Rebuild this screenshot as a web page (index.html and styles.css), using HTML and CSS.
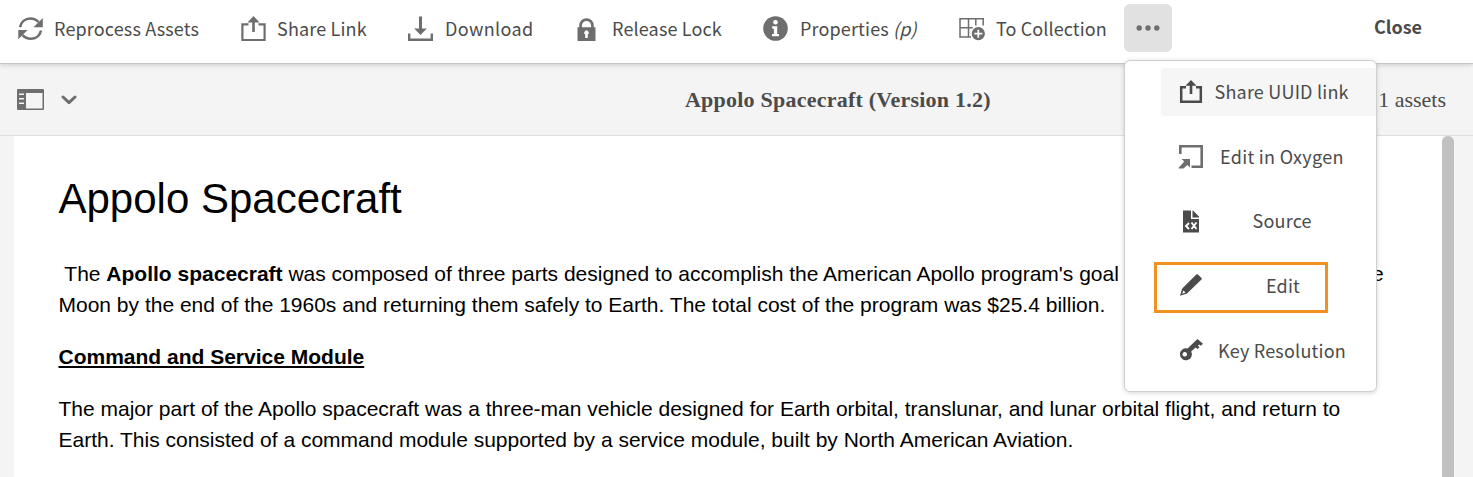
FILE: index.html
```html
<!DOCTYPE html>
<html lang="en">
<head>
<meta charset="utf-8">
<title>Appolo Spacecraft</title>
<link rel="stylesheet" href="styles.css">
</head>
<body>
<div class="app">
  <header class="toolbar">
    <div class="action"><svg class="icon" viewBox="0 0 25 25"><path d="M2 11.300C3 6 7 2.500 12.300 2.500c3.500 0 6.200 1.300 8.200 3.500M23 14.500C22 19.500 18 22.700 12.800 22.700c-3.500 0-6.300-1.300-8.300-3.500" fill="none" stroke="currentColor" stroke-width="2.500"/><path d="M24.800 2v9.200H15.500zM.300 23.200V14H9.600z"/></svg><span class="t-reprocess">Reprocess Assets</span></div>
    <div class="action"><svg class="icon" viewBox="0 0 25 25"><path d="M7.500 8.300H1.400V24h22.200V8.300h-6.100" fill="none" stroke="currentColor" stroke-width="2.200"/><path d="M12.500 0l6 6.500h-4.700V16h-2.600V6.500H6.500z"/></svg><span class="t-share">Share Link</span></div>
    <div class="action"><svg class="icon" viewBox="0 0 25 25"><path d="M1.200 17.500v6.200h22.600v-6.200" fill="none" stroke="currentColor" stroke-width="2.400"/><path d="M11 .500h3v12h4.800L12.500 19 6.200 12.500H11z"/></svg><span class="t-download">Download</span></div>
    <div class="action"><svg class="icon icon-lock" viewBox="0 0 20 25"><path fill-rule="evenodd" d="M.500 11.200h1.700V9.500a7.300 7.300 0 0 1 14.600 0v1.700h1.700V25H.500zM4.900 11.200h9.200V9.500a4.600 4.600 0 0 0-9.200 0zM8.200 18.500V22h2.600v-3.500a2.200 2.200 0 1 0-2.600 0z"/></svg><span class="t-lock">Release Lock</span></div>
    <div class="action"><svg class="icon" viewBox="0 0 25 25"><circle cx="12.500" cy="12.500" r="12.300"/><circle cx="12.500" cy="6.300" r="2.300" fill="#fff"/><path d="M9.200 10.300h5v7.600h1.800v2.400H9v-2.400h1.900v-5.200H9.200z" fill="#fff"/></svg><span class="t-props">Properties <i>(p)</i></span></div>
    <div class="action"><svg class="icon icon-grid" viewBox="0 0 26 25"><path d="M.800 2.700h23.400M1 2v19h11M9.500 2v19M.800 11.700h13M16.800 2v7.500M24.200 2v7.500" fill="none" stroke="currentColor" stroke-width="1.500"/><circle cx="19.300" cy="17.700" r="6.600"/><path d="M19.300 13.700v8M15.300 17.700h8" stroke="#fff" stroke-width="1.700"/></svg><span class="t-coll">To Collection</span></div>
    <button class="more" aria-label="More"><svg width="24" height="6" viewBox="0 0 24 6"><circle cx="3.200" cy="3" r="2.700"/><circle cx="12" cy="3" r="2.700"/><circle cx="20.800" cy="3" r="2.700"/></svg></button>
    <div class="close">Close</div>
  </header>
  <div class="subbar">
    <div class="rail"><svg width="27" height="21" viewBox="0 0 27 21"><path fill-rule="evenodd" d="M1 0h25q1 0 1 1v19q0 1-1 1H1q-1 0-1-1V1q0-1 1-1zM9 4v15.500h16.500V4zM2 4.500V6h5V4.500zM2 9v1.500h5V9zM2 13.500V15h5v-1.500z"/></svg><svg width="16" height="10" viewBox="0 0 16 10"><path d="M2 2l6 5.700L14 2" fill="none" stroke="currentColor" stroke-width="3" stroke-linecap="round" stroke-linejoin="round"/></svg></div>
    <div class="title"><span>Appolo Spacecraft (Version 1.2)</span></div>
    <div class="count">1 assets</div>
  </div>
  <main class="stage">
    <article class="doc">
      <h1><span>Appolo Spacecraft</span></h1>
      <p>&nbsp;The <b>Apollo spacecraft</b> was composed of three parts designed to accomplish the American Apollo program's goal<span class="gap"></span>e<br>Moon by the end of the 1960s and returning them safely to Earth. The total cost of the program was $25.4 billion.</p>
      <p><b class="under">Command and Service Module</b></p>
      <p>The major part of the Apollo spacecraft was a three-man vehicle designed for Earth orbital, translunar, and lunar orbital flight, and return to<br>Earth. This consisted of a command module supported by a service module, built by North American Aviation.</p>
    </article>
    <div class="scrollbar"></div>
  </main>
</div>
<nav class="menu">
  <div class="row row-active"><svg class="mi" viewBox="0 0 25 25"><path d="M8 8.300H3.200V22.700h19.600V8.300H18" fill="none" stroke="currentColor" stroke-width="2.500"/><path d="M13 1l5.500 5.800h-4.200V15h-2.600V6.800H7.500z"/></svg><span class="m1">Share UUID link</span></div>
  <div class="row"><svg class="mi mi-light" viewBox="0 0 25 25"><path d="M2.300 10V2.300h21.400v20.400H13.500" fill="none" stroke="currentColor" stroke-width="2.600"/><path d="M3.500 15h8.500v8.500L9.300 21l-3.800 3.500H.800v-1l5.500-6z"/></svg><span class="m2">Edit in Oxygen</span></div>
  <div class="row"><svg class="mi" viewBox="0 0 25 25"><path fill-rule="evenodd" d="M5 1.500h8V10h8v13.500H5zM14.500 1.500h.500l6 6v1h-6.500z"/><path d="M11 14l-3 3 3 3M13.500 13.500l5 6.500M18.500 13.500l-5 6.500" fill="none" stroke="#fff" stroke-width="1.900"/></svg><span class="m3">Source</span></div>
  <div class="row"><svg class="mi" viewBox="0 0 25 25"><path fill-rule="evenodd" d="M18.300 1.500q.800-.700 1.600 0l3.600 3.400q.700.800 0 1.600L9 20.500 2 22.800 4.200 15.500zM5.500 17.500l-1.400 3.200 3.400-1.100z"/></svg><span class="m4">Edit</span></div>
  <div class="row"><svg class="mi" viewBox="0 0 25 25"><path fill-rule="evenodd" d="M19.500 1l5.500 4.700-2.300 2-1.500-1.200-1.200 1 1.500 1.700-2 1.800-1.900-1.600-4.400 4A6 6 0 1 1 9.500 10.500zM6.800 14a2.300 2.300 0 1 0 .010 0z"/></svg><span class="m5">Key Resolution</span></div>
  <div class="highlight"></div>
</nav>
</body>
</html>
```
FILE: styles.css
```css
* { box-sizing: border-box; }
body { margin: 0; background: #f4f4f4; overflow: hidden; color: #4b4b4b; font: 18px/24px "Noto Sans CJK SC", "Open Sans", sans-serif; }
svg { display: block; flex: none; fill: currentColor; color: #6e6e6e; }
span { white-space: nowrap; }
.app { height: 477px; display: flex; flex-direction: column; }
.toolbar { position: relative; flex: none; height: 64px; padding-left: 18px; display: grid; grid-template-columns: 223px 167px 169px 186px 196px 165px 250px 1fr; background: #fff; border-bottom: 1px solid #c6c6c6; box-shadow: 0 1px 5px rgba(0,0,0,.16); }
.action { display: flex; align-items: center; height: 57px; gap: 11px; letter-spacing: .15px; }
.action span { padding-bottom: 2px; }
.icon { width: 25px; height: 25px; }
.icon-lock { width: 20px; margin-right: 4px; }
.icon-grid { width: 26px; }
.t-download { padding-left: 1px; letter-spacing: .35px; }
.t-props { padding-left: 1px; }
.t-coll { letter-spacing: .1px; }
.more { width: 48px; height: 48px; margin-top: 4px; border: 0; border-radius: 6px; background: #e1e1e1; display: grid; place-items: center; padding: 0; }
.close { font-weight: 700; padding-top: 14px; }
.subbar { flex: none; height: 72px; border-bottom: 1px solid #dedede; display: grid; grid-template-columns: 668px auto 1fr; align-items: center; font: 22px/26px "Liberation Serif", serif; padding: 0 27px 0 17px; }
.rail { display: flex; gap: 17px; align-items: center; }
.title { font-weight: 700; letter-spacing: .23px; }
.count { text-align: right; }
.stage { flex: 1; min-height: 0; display: flex; padding-left: 14px; }
.doc { width: 1428px; padding: 37px 0 0 44.500px; background: #fff; color: #000; font: 21px/31px "Liberation Sans", Arial, sans-serif; white-space: nowrap; overflow: hidden; }
.doc h1 { margin: 0 0 34px; font-size: 42px; line-height: 51px; font-weight: 400; }
.doc p { margin: 0 0 21px; }
.gap { display: inline-block; width: 253px; }
.under { text-decoration: underline; }
.scrollbar { width: 12px; background: #c1c1c1; border-radius: 6px 6px 0 0; }
.menu { position: absolute; left: 1124px; top: 60px; width: 253px; height: 332px; padding: 7px 0 0 36px; background: #fff; border: 1px solid #cfcfcf; border-radius: 6px; box-shadow: 0 1px 5px rgba(0,0,0,.16); display: flex; flex-direction: column; gap: 17px; }
.row { height: 47.700px; display: flex; align-items: center; padding-left: 17px; border-radius: 4px 0 0 4px; letter-spacing: .2px; }
.row span { padding-bottom: 2px; }
.row-active { background: #f6f6f6; }
.mi { width: 25px; height: 25px; color: #4b4b4b; }
.mi-light { color: #6e6e6e; }
.m1 { margin-left: 11.500px; }
.m2 { margin-left: 17px; letter-spacing: .3px; }
.m3 { margin-left: 49.500px; }
.m4 { margin-left: 63px; }
.m5 { margin-left: 15px; }
.highlight { position: absolute; left: 29px; top: 201px; width: 174px; height: 51px; border: 3px solid #f09222; }
```
